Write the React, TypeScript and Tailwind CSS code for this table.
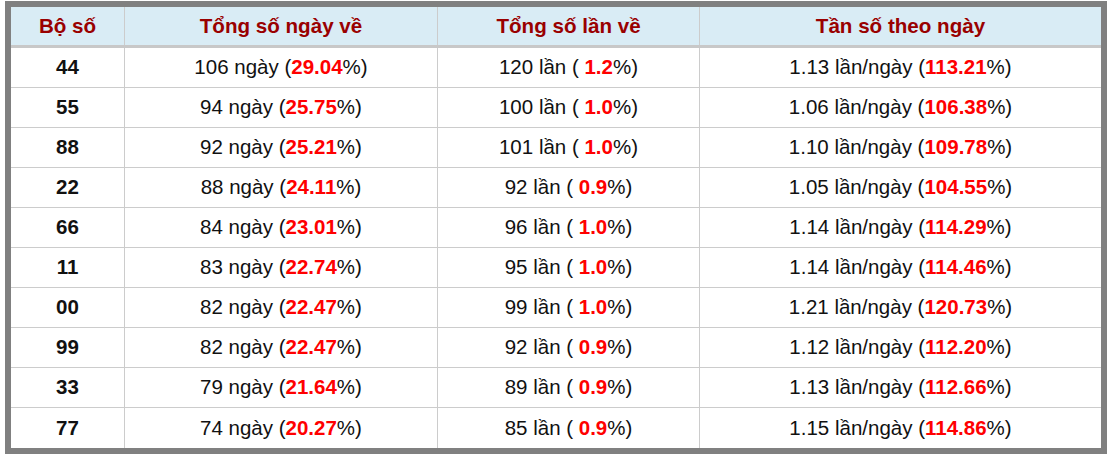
const rows = [
  { bo: "44", ngay: "106", pNgay: "29.04", lan: "120", pLan: "1.2", tan: "1.13", pTan: "113.21" },
  { bo: "55", ngay: "94", pNgay: "25.75", lan: "100", pLan: "1.0", tan: "1.06", pTan: "106.38" },
  { bo: "88", ngay: "92", pNgay: "25.21", lan: "101", pLan: "1.0", tan: "1.10", pTan: "109.78" },
  { bo: "22", ngay: "88", pNgay: "24.11", lan: "92", pLan: "0.9", tan: "1.05", pTan: "104.55" },
  { bo: "66", ngay: "84", pNgay: "23.01", lan: "96", pLan: "1.0", tan: "1.14", pTan: "114.29" },
  { bo: "11", ngay: "83", pNgay: "22.74", lan: "95", pLan: "1.0", tan: "1.14", pTan: "114.46" },
  { bo: "00", ngay: "82", pNgay: "22.47", lan: "99", pLan: "1.0", tan: "1.21", pTan: "120.73" },
  { bo: "99", ngay: "82", pNgay: "22.47", lan: "92", pLan: "0.9", tan: "1.12", pTan: "112.20" },
  { bo: "33", ngay: "79", pNgay: "21.64", lan: "89", pLan: "0.9", tan: "1.13", pTan: "112.66" },
  { bo: "77", ngay: "74", pNgay: "20.27", lan: "85", pLan: "0.9", tan: "1.15", pTan: "114.86" },
];

const cols = "grid grid-cols-[114px_313px_262px_401px]";
const cell = "flex items-center justify-center border-r border-[#cccccc]";

function Pct({ v }: { v: string }) {
  return <span className="font-bold text-[#ff0000]">{v}</span>;
}

export default function App() {
  return (
    <div className="bg-white pl-[5px] pt-[1px] w-[1108px] h-[456px]" style={{ fontFamily: '"Liberation Sans", Arial, sans-serif' }}>
      <div className="w-[1102px] border-[6px] border-[#808080] bg-white">
        {/* header */}
        <div className={`${cols} h-[41px] bg-[#d9ecf5] border-b-[3px] border-[#c8c8c8] text-[20.6px] font-bold text-[#990000]`}>
          <div className={cell}>Bộ số</div>
          <div className={cell}>Tổng số ngày về</div>
          <div className={cell}>Tổng số lần về</div>
          <div className="flex items-center justify-center">Tần số theo ngày</div>
        </div>

        {/* rows */}
        {rows.map((r, i) => (
          <div
            key={r.bo}
            className={`${cols} h-[40px] text-[20.5px] text-[#111111] ${i < rows.length - 1 ? "border-b border-[#cccccc]" : ""}`}
          >
            <div className={`${cell} font-bold`}>{r.bo}</div>
            <div className={cell}>
              <span>
                {r.ngay} ngày (<Pct v={r.pNgay} />%)
              </span>
            </div>
            <div className={cell}>
              <span>
                {r.lan} lần ( <Pct v={r.pLan} />%)
              </span>
            </div>
            <div className="flex items-center justify-center">
              <span>
                {r.tan} lần/ngày (<Pct v={r.pTan} />%)
              </span>
            </div>
          </div>
        ))}
      </div>
    </div>
  );
}
